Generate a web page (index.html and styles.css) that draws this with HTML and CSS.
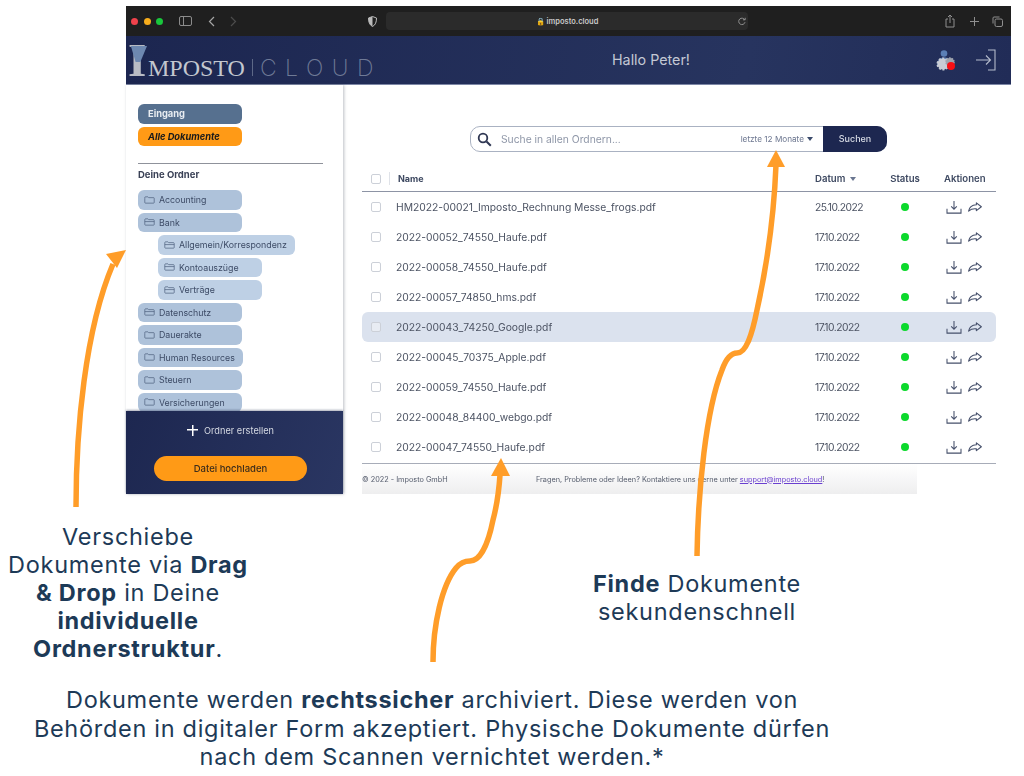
FILE: index.html
```html
<!DOCTYPE html>
<html lang="de">
<head>
  <meta charset="UTF-8">
  <meta name="viewport" content="width=device-width, initial-scale=1.0">
  <title>Imposto Cloud</title>
  <link rel="stylesheet" href="styles.css">
</head>
<body>
  <svg class="defs" width="0" height="0">
    <symbol id="folder" viewBox="0 0 14 10">
      <path d="M1 3V1.8C1 1.2 1.4 1 1.9 1H5l1 1h6.2c.5 0 .8.3.8.8v5.4c0 .5-.3.8-.8.8H1.8C1.3 9 1 8.7 1 8.2Z" fill="none" stroke="#4c5f7c" stroke-width=".9"/>
    </symbol>
    <symbol id="folder-open" viewBox="0 0 14 10">
      <path d="M1 8V2c0-.6.4-1 .9-1H5l1 1h6c.5 0 1 .4 1 1v5.2c0 .5-.3.8-.8.8H1.8C1.3 9 1 8.6 1 8ZM1 4.5h12" fill="none" stroke="#4c5f7c" stroke-width=".9"/>
    </symbol>
    <symbol id="download" viewBox="0 0 18 16">
      <path d="M9 1v9M5.8 7.2 9 10.5l3.2-3.3M1 10v5h16v-5" fill="none" stroke="#46506b" stroke-width="1.2"/>
    </symbol>
    <symbol id="forward" viewBox="0 0 16 11">
      <path d="M9.5 1 15 5.2 9.5 9.5V7.6C6 7.2 3.5 7.8 1 10 1.6 6 4.8 3.4 9.5 3.1Z" fill="none" stroke="#46506b" stroke-width="1.2" stroke-linejoin="round"/>
    </symbol>
  </svg>

  <div class="window">
    <div class="browser-bar">
      <span class="light light-red"></span>
      <span class="light light-yellow"></span>
      <span class="light light-green"></span>
      <svg class="sidebar-toggle" width="13" height="10" viewBox="0 0 13 10"><rect x=".5" y=".5" width="12" height="9" rx="1.5" fill="none" stroke="#8b8b8b"/><path d="M4.5 1v8" stroke="#8b8b8b"/></svg>
      <svg class="nav-back" width="7" height="11" viewBox="0 0 7 11"><path d="M6 1 1.5 5.5 6 10" fill="none" stroke="#a5a5a5" stroke-width="1.2"/></svg>
      <svg class="nav-next" width="7" height="11" viewBox="0 0 7 11"><path d="M1 1l4.5 4.5L1 10" fill="none" stroke="#4c4c4c" stroke-width="1.2"/></svg>
      <svg class="shield" width="9" height="11" viewBox="0 0 9 11"><path d="M4.5.5 8.5 2c0 4-1 7-4 8.5C1.5 9 .5 6 .5 2Z" fill="none" stroke="#bbb"/><path d="M4.5.5 .5 2c0 4 1 7 4 8.5Z" fill="#bbb"/></svg>
      <div class="address">
        <span class="url">&#128274; imposto.cloud</span>
        <svg class="reload" width="8" height="9" viewBox="0 0 8 9"><path d="M6.8 3A3.2 3.2 0 1 0 7 5.2M5 2.8h2.2V.8" fill="none" stroke="#8f8f8f"/></svg>
      </div>
      <svg width="10" height="14" viewBox="0 0 10 14"><path d="M3 5H1v8h8V5H7M5 9V1M3 3l2-2 2 2" fill="none" stroke="#8f8f8f"/></svg>
      <svg class="bar-plus" width="9" height="9" viewBox="0 0 9 9"><path d="M4.5 0v9M0 4.500h9" stroke="#8f8f8f"/></svg>
      <svg width="11" height="11" viewBox="0 0 11 11"><rect x="3" y="3" width="7.5" height="7.5" rx="1.5" fill="none" stroke="#8f8f8f"/><path d="M1 7.5V2c0-.6.4-1 1-1h5.5" fill="none" stroke="#8f8f8f"/></svg>
    </div>

    <header class="app-header">
      <div class="logo">
        <span class="logo-i">I</span><span class="logo-name">MPOSTO</span><span class="logo-sep"></span><span class="logo-cloud">CLOUD</span>
      </div>
      <div class="greeting">Hallo Peter!</div>
      <div class="header-icons">
        <svg width="23" height="23" viewBox="0 0 23 23">
          <circle cx="10" cy="4.5" r="3.3" fill="#5b7fb5"/>
          <path d="M3 16c0-5 3-7.500 7-7.500s5 2 6 4v4Z" fill="#5b7fb5"/>
          <circle cx="9" cy="15" r="5.5" fill="#c9ccd4" stroke="#c9ccd4" stroke-dasharray="2 1.5" stroke-width="2"/>
          <circle cx="16" cy="13" r="4" fill="#9ea3ad" stroke="#9ea3ad" stroke-dasharray="1.5 1" stroke-width="1.5"/>
          <circle cx="17" cy="17" r="4" fill="#f60f14"/>
        </svg>
        <svg width="20" height="22" viewBox="0 0 20 22"><path d="M0 11h14M10 6.5l4.500 4.500L10 15.5M12 1h7v20h-7" fill="none" stroke="#b4bbcb" stroke-width="1.1"/></svg>
      </div>
    </header>

    <div class="app-body">
      <aside class="sidebar">
        <div class="sidebar-scroll">
          <div class="pill pill-inbox">Eingang</div>
          <div class="pill pill-all">Alle Dokumente</div>
          <div class="sidebar-title">Deine Ordner</div>
          <div class="folders">
            <div class="folder"><svg><use href="#folder"/></svg>Accounting</div>
            <div class="folder"><svg><use href="#folder-open"/></svg>Bank</div>
            <div class="folder sub sub-wide"><svg><use href="#folder-open"/></svg>Allgemein/Korrespondenz</div>
            <div class="folder sub"><svg><use href="#folder-open"/></svg>Kontoauszüge</div>
            <div class="folder sub"><svg><use href="#folder-open"/></svg>Verträge</div>
            <div class="folder"><svg><use href="#folder-open"/></svg>Datenschutz</div>
            <div class="folder"><svg><use href="#folder"/></svg>Dauerakte</div>
            <div class="folder folder-wide"><svg><use href="#folder"/></svg>Human Resources</div>
            <div class="folder"><svg><use href="#folder"/></svg>Steuern</div>
            <div class="folder"><svg><use href="#folder"/></svg>Versicherungen</div>
          </div>
        </div>
        <div class="sidebar-foot">
          <div class="new-folder"><span class="plus"></span>Ordner erstellen</div>
          <div class="upload">Datei hochladen</div>
        </div>
      </aside>

      <main class="content">
        <div class="search">
          <svg class="search-icon" width="15" height="15" viewBox="0 0 15 15"><circle cx="6" cy="6" r="4.3" fill="none" stroke="#2e3652" stroke-width="1.8"/><path d="m9.5 9.5 4.3 4.3" stroke="#2e3652" stroke-width="2"/></svg>
          <span class="search-text">Suche in allen Ordnern...</span>
          <span class="search-range">letzte 12 Monate<i class="caret"></i></span>
          <span class="search-btn">Suchen</span>
        </div>

        <div class="file-head">
          <span class="check"></span>
          <span class="col-name">Name</span>
          <span>Datum<i class="caret caret-head"></i></span>
          <span class="col-status">Status</span>
          <span class="col-actions">Aktionen</span>
        </div>

        <div class="file-row">
          <span class="check"></span><span>HM2022-00021_Imposto_Rechnung Messe_frogs.pdf</span><span class="date">25.10.2022</span>
          <span class="dot"></span>
          <span class="actions"><svg class="ic-down"><use href="#download"/></svg><svg class="ic-fwd"><use href="#forward"/></svg></span>
        </div>
        <div class="file-row">
          <span class="check"></span><span>2022-00052_74550_Haufe.pdf</span><span class="date">17.10.2022</span>
          <span class="dot"></span>
          <span class="actions"><svg class="ic-down"><use href="#download"/></svg><svg class="ic-fwd"><use href="#forward"/></svg></span>
        </div>
        <div class="file-row">
          <span class="check"></span><span>2022-00058_74550_Haufe.pdf</span><span class="date">17.10.2022</span>
          <span class="dot"></span>
          <span class="actions"><svg class="ic-down"><use href="#download"/></svg><svg class="ic-fwd"><use href="#forward"/></svg></span>
        </div>
        <div class="file-row">
          <span class="check"></span><span>2022-00057_74850_hms.pdf</span><span class="date">17.10.2022</span>
          <span class="dot"></span>
          <span class="actions"><svg class="ic-down"><use href="#download"/></svg><svg class="ic-fwd"><use href="#forward"/></svg></span>
        </div>
        <div class="file-row active">
          <span class="check"></span><span>2022-00043_74250_Google.pdf</span><span class="date">17.10.2022</span>
          <span class="dot"></span>
          <span class="actions"><svg class="ic-down"><use href="#download"/></svg><svg class="ic-fwd"><use href="#forward"/></svg></span>
        </div>
        <div class="file-row">
          <span class="check"></span><span>2022-00045_70375_Apple.pdf</span><span class="date">17.10.2022</span>
          <span class="dot"></span>
          <span class="actions"><svg class="ic-down"><use href="#download"/></svg><svg class="ic-fwd"><use href="#forward"/></svg></span>
        </div>
        <div class="file-row">
          <span class="check"></span><span>2022-00059_74550_Haufe.pdf</span><span class="date">17.10.2022</span>
          <span class="dot"></span>
          <span class="actions"><svg class="ic-down"><use href="#download"/></svg><svg class="ic-fwd"><use href="#forward"/></svg></span>
        </div>
        <div class="file-row">
          <span class="check"></span><span>2022-00048_84400_webgo.pdf</span><span class="date">17.10.2022</span>
          <span class="dot"></span>
          <span class="actions"><svg class="ic-down"><use href="#download"/></svg><svg class="ic-fwd"><use href="#forward"/></svg></span>
        </div>
        <div class="file-row">
          <span class="check"></span><span>2022-00047_74550_Haufe.pdf</span><span class="date">17.10.2022</span>
          <span class="dot"></span>
          <span class="actions"><svg class="ic-down"><use href="#download"/></svg><svg class="ic-fwd"><use href="#forward"/></svg></span>
        </div>

        <footer class="page-foot">
          <span class="copy">© 2022 - Imposto GmbH</span>
          <span>Fragen, Probleme oder Ideen? Kontaktiere uns gerne unter <a href="#">support@imposto.cloud</a>!</span>
        </footer>
      </main>
    </div>
  </div>

  <div class="captions">
    <p class="caption caption-drag">Verschiebe<br>Dokumente via <b>Drag</b><br><b>&amp; Drop</b> in Deine<br><b>individuelle</b><br><b>Ordnerstruktur</b>.</p>
    <p class="caption caption-find"><b>Finde</b> Dokumente<br>sekundenschnell</p>
  </div>
  <p class="caption caption-legal">Dokumente werden <b>rechtssicher</b> archiviert. Diese werden von<br>Behörden in digitaler Form akzeptiert. Physische Dokumente dürfen<br>nach dem Scannen vernichtet werden.*</p>

  <!-- pfeile liegen ueber allem -->
  <svg class="arrows" width="1024" height="776" viewBox="0 0 1024 776">
    <g fill="none" stroke="#ff9d29" stroke-width="5.5">
      <path d="M76 507C76 430 85 330 113 264"/>
      <path d="M697 556C698 490 706 410 722 370 727 356 732 353 737 353 746 353 752 335 757 310 767 265 774 215 776 165"/>
      <path d="M433 662C433 625 442 585 456 568 461 562 465 561 470 561 480 561 488 545 493 520 497 505 499 490 500 475"/>
    </g>
    <g fill="#ff9d29">
      <path d="M126 250 106 254 117 268Z"/>
      <path d="M776 150 767 167 785 167Z"/>
      <path d="M501 458 491 476 510 476Z"/>
    </g>
  </svg>
</body>
</html>
```

FILE: styles.css
```css
* {
  box-sizing: border-box;
}
body {
  margin: 0;
  background: #fff;
  font-family: Inter, "Open Sans", sans-serif;
  color: #1d3a57;
  position: relative;
  height: 776px;
  overflow: hidden;
}
.defs {
  display: block;
}
.window {
  width: 885px;
  height: 488px;
  margin: 6px 0 0 126px;
  filter: blur(.35px);
}

/* browser */
.browser-bar {
  height: 30px;
  background: #1f1f1f;
  display: flex;
  align-items: center;
  padding-left: 5px;
  gap: 13px;
}
.light {
  width: 7px;
  height: 7px;
  border-radius: 50%;
  margin-right: -7.5px;
}
.light-red { background: #f0424b; }
.light-yellow { background: #f7ad1c; }
.light-green { background: #19c73c; }
.sidebar-toggle { margin-left: 10.5px; }
.nav-back { margin-left: 3px; }
.nav-next { margin-left: 2px; }
.shield { margin-left: 118px; }
.bar-plus { margin-left: 1.5px; }
.address {
  width: 362px;
  height: 18px;
  margin-left: -4px;
  margin-right: 184px;
  background: #2b2b2b;
  border-radius: 4px;
  display: flex;
  align-items: center;
  justify-content: center;
  position: relative;
  color: #c9c9c9;
  font-size: 7.5px;
  font-weight: 600;
}
.reload {
  position: absolute;
  right: 2px;
  top: 5px;
}
.app-header {
  height: 49px;
  background: linear-gradient(100deg, #1c2650, #27345f 70%, #212c57);
  border-bottom: 1px solid #7d87a6;
  display: flex;
  align-items: center;
  position: relative;
  padding: 0 15px 0 2px;
}
.logo {
  display: flex;
  align-items: baseline;
  height: 42px;
  color: #c3c7cf;
  font-family: "Liberation Serif", serif;
  white-space: nowrap;
}
.logo-i {
  position: relative;
  font-size: 47px;
  line-height: 42px;
  font-weight: 700;
  color: #b9bcc4;
  width: 19px;
}
.logo-i::before {
  content: "";
  position: absolute;
  left: 0;
  top: 7px;
  width: 19px;
  height: 16px;
  background: #6d88b0;
  clip-path: polygon(15% 0, 100% 0, 65% 100%, 40% 100%);
}
.logo-name {
  font-size: 24px;
  margin-left: 1px;
}
.logo-sep {
  width: 1px;
  height: 17px;
  background: #5d6887;
  margin: 0 7px 0 7px;
}
.logo-cloud {
  font-family: Inter, sans-serif;
  font-weight: 200;
  font-size: 23px;
  letter-spacing: 8.5px;
  color: #6f7a96;
}
.greeting {
  position: absolute;
  left: 486px;
  top: 15px;
  font-size: 14.3px;
  color: #c3c8d4;
}
.header-icons {
  margin-left: auto;
  display: flex;
  align-items: center;
  gap: 19px;
}

/* app */
.app-body {
  display: flex;
  height: 409px;
}
.sidebar {
  width: 217px;
  display: flex;
  flex-direction: column;
  box-shadow: 1px 0 3px rgba(60, 70, 90, .35);
  position: relative;
}
.sidebar-scroll {
  height: 326px;
  overflow: hidden;
  padding: 19px 0 0 12px;
}
.pill {
  width: 104px;
  height: 19.5px;
  border-radius: 6px;
  line-height: 19.5px;
  font-size: 9.3px;
  font-weight: 700;
  padding-left: 10px;
  margin-bottom: 3px;
}
.pill-inbox {
  background: #56708f;
  color: #e9edf2;
}
.pill-all {
  background: #ff9a16;
  color: #1b1b1b;
  font-style: italic;
}
.sidebar-title {
  width: 185px;
  margin-top: 17px;
  padding-top: 5px;
  border-top: 1.5px solid #8f929b;
  font-size: 9.5px;
  font-weight: 700;
  color: #3a4156;
  line-height: 11px;
}
.folders {
  margin-top: 10px;
  display: flex;
  flex-direction: column;
  gap: 3px;
}
.folder {
  width: 104px;
  height: 19.5px;
  flex: none;
  background: #aec2da;
  border-radius: 6px;
  display: flex;
  align-items: center;
  font-size: 8.8px;
  color: #3d4b66;
  padding-left: 6px;
  white-space: nowrap;
}
.folder svg {
  width: 11px;
  height: 8px;
  margin-right: 4px;
  flex: none;
}
.folder-wide { width: 105px; }
.sub {
  margin-left: 20px;
  background: #bed0e5;
}
.sub-wide { width: 137px; }
.sidebar-foot {
  height: 83px;
  background: linear-gradient(110deg, #1d2750, #2a3662);
  display: flex;
  flex-direction: column;
  align-items: center;
  padding-right: 8px;
  color: #d6dae3;
  box-shadow: 0 -1px 2px rgba(30, 40, 70, .4);
}
.new-folder {
  display: flex;
  align-items: center;
  margin-top: 12px;
  height: 14px;
  font-size: 9.2px;
}
.plus {
  width: 11px;
  height: 11px;
  margin-right: 6px;
  background: linear-gradient(#fff, #fff) center / 11px 1.5px no-repeat, linear-gradient(#fff, #fff) center / 1.5px 11px no-repeat;
}
.upload {
  width: 153px;
  height: 25px;
  margin-top: 19px;
  border-radius: 13px;
  background: #ff9a16;
  color: #3b2c1b;
  font-size: 9.5px;
  font-weight: 500;
  line-height: 25px;
  text-align: center;
}
.content {
  flex: 1;
  padding: 41px 15px 0 19px;
}
.search {
  width: 417px;
  height: 26px;
  margin-left: 108px;
  display: flex;
  align-items: center;
  border: 1px solid #aab2c2;
  border-radius: 10px;
  padding-left: 6px;
  color: #8f97a8;
}
.search-icon { margin-right: 9px; }
.search-text {
  flex: 1;
  font-size: 10.3px;
}
.search-range {
  font-size: 8.2px;
  color: #6d7790;
  margin-right: 10px;
}
.caret {
  display: inline-block;
  border: 3.5px solid transparent;
  border-top: 4px solid #3a4a6b;
  border-bottom: 0;
  margin-left: 3px;
  vertical-align: 1px;
}
.caret-head {
  border-top-color: #6a7690;
  margin-left: 5px;
}
.search-btn {
  width: 64px;
  height: 26px;
  margin: -1px -1px -1px 0;
  background: #1d2750;
  color: #d9dde6;
  border-radius: 0 10px 10px 0;
  font-size: 9px;
  font-weight: 500;
  line-height: 26px;
  text-align: center;
}

/* liste */
.file-head, .file-row {
  display: grid;
  grid-template-columns: 34px 419px 72px 36px 73px;
  align-items: center;
}
.file-head {
  height: 26px;
  margin-top: 14px;
  border-bottom: 1.5px solid #8d94a5;
  font-size: 9.6px;
  font-weight: 600;
  color: #3f4a62;
}
.col-name {
  margin-left: -7px;
  padding-left: 8px;
  border-left: 1px solid #dfe2e8;
  line-height: 13px;
  font-size: 9px;
  font-weight: 700;
}
.col-status {
  text-align: center;
}
.col-actions {
  padding-left: 21px;
  white-space: nowrap;
}
.file-row {
  height: 30px;
  font-size: 10.3px;
  color: #4c5363;
  white-space: nowrap;
  border-radius: 6px;
}
.date {
  letter-spacing: -.5px;
}
.active {
  background: #dbe2ee;
}
.check {
  width: 10px;
  height: 10px;
  margin-left: 9px;
  border: 1px solid #ccd0d8;
  border-radius: 2px;
  background: #fff;
}
.active .check {
  background: #e8ecf3;
}
.dot {
  width: 8px;
  height: 8px;
  border-radius: 50%;
  background: #0bd92c;
  justify-self: center;
}
.actions {
  display: flex;
  align-items: center;
  padding-left: 23px;
  gap: 5px;
}
.ic-down {
  width: 16px;
  height: 14px;
}
.ic-fwd {
  width: 16px;
  height: 10px;
}
.page-foot {
  height: 31px;
  margin-top: 1px;
  border-top: 1.5px solid #a7acb8;
  display: flex;
  align-items: center;
  background: linear-gradient(#fff, #eeeeef) 0 0 / 555px 100% no-repeat;
  font-size: 7.3px;
  color: #555c6c;
  white-space: nowrap;
}
.page-foot a {
  color: #6a3fd0;
}
.copy {
  width: 174px;
}

/* bildtexte */
.captions {
  display: flex;
  align-items: flex-start;
}
.caption {
  margin: 0;
  text-align: center;
  font-size: 23.5px;
  letter-spacing: .7px;
  line-height: 28px;
  white-space: nowrap;
}
.caption-drag {
  width: 250px;
  margin: 29px 0 0 3px;
}
.caption-find {
  width: 240px;
  margin: 76px 0 0 324px;
}
.caption-legal {
  width: 864px;
  margin-top: 23px;
  line-height: 28.5px;
}
.arrows {
  position: absolute;
  left: 0;
  top: 0;
  pointer-events: none;
}
```
